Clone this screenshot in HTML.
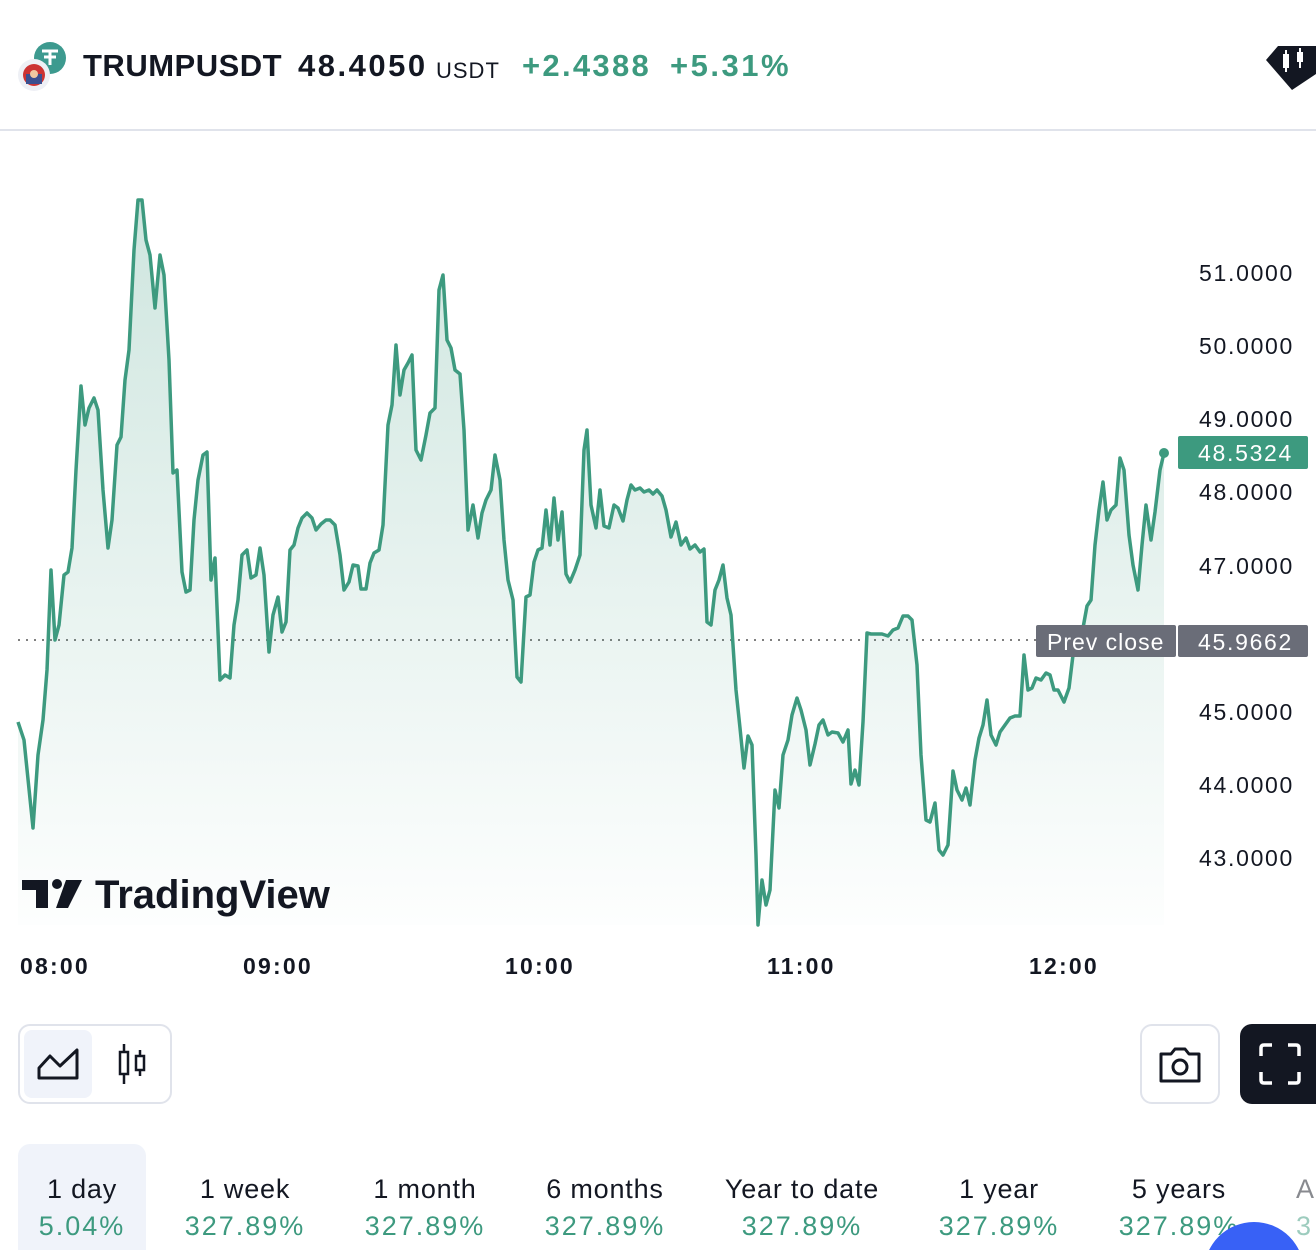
<!DOCTYPE html>
<html><head><meta charset="utf-8"><style>
*{margin:0;padding:0;box-sizing:border-box}
html,body{width:1316px;height:1250px;overflow:hidden}
body{background:#fff;font-family:"Liberation Sans",sans-serif;color:#131722;position:relative}
.hdr{position:absolute;top:0;left:0;width:1316px;height:131px;border-bottom:2px solid #e0e3eb}
.abs{position:absolute;white-space:nowrap}
.yl{position:absolute;left:1199px;font-size:23px;color:#131722;letter-spacing:1.7px}
.xl{position:absolute;top:953px;font-size:23px;font-weight:bold;letter-spacing:2.2px}
.tab{position:absolute;top:1144px;height:106px;text-align:center;font-size:27px;letter-spacing:0.8px}
.tab .p{color:#3d9a7f;margin-top:6px;letter-spacing:2px}
</style></head><body>
<div class="hdr">
 <svg class="abs" style="left:18px;top:40px" width="52" height="52" viewBox="0 0 52 52">
  <circle cx="32" cy="18" r="16" fill="#3d9a8f"/>
  <path d="M24 11h16M32 11v14M26 17h12" stroke="#fff" stroke-width="3" fill="none"/>
  <circle cx="16" cy="35" r="16" fill="#eef0f5"/>
  <circle cx="16" cy="35" r="11" fill="#c33"/>
  <rect x="8" y="34" width="16" height="10" fill="#3b4f8f"/>
  <circle cx="16" cy="34" r="4" fill="#f0c8a0"/>
 </svg>
 <div class="abs" style="left:83px;top:48px;font-size:31px;font-weight:bold;letter-spacing:0.5px">TRUMPUSDT</div>
 <div class="abs" style="left:298px;top:48px;font-size:31px;font-weight:bold;letter-spacing:2.5px">48.4050</div>
 <div class="abs" style="left:436px;top:58px;font-size:22px;letter-spacing:1px">USDT</div>
 <div class="abs" style="left:522px;top:48px;font-size:31px;font-weight:bold;color:#3d9a7f;letter-spacing:2.3px">+2.4388</div>
 <div class="abs" style="left:670px;top:48px;font-size:31px;font-weight:bold;color:#3d9a7f;letter-spacing:2.5px">+5.31%</div>
 <svg class="abs" style="left:1264px;top:42px" width="52" height="50" viewBox="0 0 52 50">
  <path d="M2 18 14 4h38v28L28 48Z" fill="#131722"/>
  <rect x="19" y="12" width="6" height="14" fill="#fff"/><path d="M22 8v22" stroke="#fff" stroke-width="2"/>
  <rect x="33" y="10" width="6" height="10" fill="#fff"/><path d="M36 6v20" stroke="#fff" stroke-width="2"/>
 </svg>
</div>

<svg class="abs" style="left:0;top:0" width="1316" height="1000">
 <defs><linearGradient id="g" x1="0" y1="0" x2="0" y2="1"><stop offset="0" stop-color="#3d9a7f" stop-opacity="0.25"/><stop offset="1" stop-color="#3d9a7f" stop-opacity="0.01"/></linearGradient></defs>
 <line x1="18" y1="640" x2="1036" y2="640" stroke="#555" stroke-width="1.5" stroke-dasharray="2,6"/>
 <polygon fill="url(#g)" points="18,925 18,722 24,740 33,828 38,755 43,720 47,670 51,570 55,640 59,625 64,575 68,572 72,548 76,470 81,386 85,425 89,408 94,398 98,410 103,490 108,548 112,520 117,445 121,437 125,380 129,350 134,250 138,200 142,200 146,240 150,255 155,308 160,255 164,275 169,360 173,473 177,470 182,572 186,592 190,590 194,520 198,480 203,455 207,452 211,580 215,558 220,680 225,675 230,678 234,625 238,600 242,555 247,550 251,578 256,575 260,548 264,575 269,652 273,615 278,597 282,632 286,622 290,550 294,545 298,528 302,518 307,513 312,518 316,530 321,524 326,520 330,520 335,525 340,555 344,590 349,582 353,565 358,566 361,589 366,589 370,563 374,553 379,550 383,525 388,425 392,405 396,345 400,395 404,370 408,363 412,355 416,450 421,460 426,435 430,413 435,408 439,290 443,275 447,340 451,348 455,370 460,374 464,430 468,530 473,505 478,538 482,513 486,500 491,490 495,455 500,480 504,540 508,580 513,600 517,677 521,682 526,597 530,595 534,562 538,550 542,548 546,510 550,545 554,498 558,540 562,512 566,574 570,582 575,570 580,555 584,450 587,430 591,505 596,528 600,490 604,526 609,528 614,505 618,508 623,521 627,500 631,485 635,490 640,488 644,492 649,490 653,494 657,490 662,496 666,510 671,537 676,522 681,545 686,538 690,549 695,545 700,552 704,549 707,622 711,625 715,590 719,580 723,565 727,598 731,615 736,690 740,728 744,768 748,736 752,745 756,855 758,925 762,880 766,905 770,890 775,790 779,808 783,755 788,740 792,715 797,698 801,710 806,730 810,765 815,744 819,725 823,720 828,735 832,732 838,733 843,742 848,730 851,784 855,770 859,785 863,722 867,633 871,634 877,634 882,634 888,636 893,630 898,628 903,616 908,616 912,620 917,665 921,755 926,820 930,822 935,803 939,850 943,855 948,845 953,771 957,790 962,800 966,788 970,805 975,760 979,738 983,725 987,700 991,735 996,745 1000,732 1005,725 1010,718 1015,716 1020,716 1024,655 1028,690 1032,688 1036,678 1041,680 1046,673 1050,675 1054,690 1058,690 1064,702 1069,688 1073,655 1079,638 1083,628 1087,606 1091,600 1095,545 1099,510 1103,482 1107,520 1111,510 1116,505 1120,458 1124,470 1129,535 1133,565 1138,590 1142,545 1146,505 1151,540 1155,512 1160,470 1164,453 1164,925"/>
 <polyline fill="none" stroke="#3d9a7f" stroke-width="3.5" stroke-linejoin="round" points="18,722 24,740 33,828 38,755 43,720 47,670 51,570 55,640 59,625 64,575 68,572 72,548 76,470 81,386 85,425 89,408 94,398 98,410 103,490 108,548 112,520 117,445 121,437 125,380 129,350 134,250 138,200 142,200 146,240 150,255 155,308 160,255 164,275 169,360 173,473 177,470 182,572 186,592 190,590 194,520 198,480 203,455 207,452 211,580 215,558 220,680 225,675 230,678 234,625 238,600 242,555 247,550 251,578 256,575 260,548 264,575 269,652 273,615 278,597 282,632 286,622 290,550 294,545 298,528 302,518 307,513 312,518 316,530 321,524 326,520 330,520 335,525 340,555 344,590 349,582 353,565 358,566 361,589 366,589 370,563 374,553 379,550 383,525 388,425 392,405 396,345 400,395 404,370 408,363 412,355 416,450 421,460 426,435 430,413 435,408 439,290 443,275 447,340 451,348 455,370 460,374 464,430 468,530 473,505 478,538 482,513 486,500 491,490 495,455 500,480 504,540 508,580 513,600 517,677 521,682 526,597 530,595 534,562 538,550 542,548 546,510 550,545 554,498 558,540 562,512 566,574 570,582 575,570 580,555 584,450 587,430 591,505 596,528 600,490 604,526 609,528 614,505 618,508 623,521 627,500 631,485 635,490 640,488 644,492 649,490 653,494 657,490 662,496 666,510 671,537 676,522 681,545 686,538 690,549 695,545 700,552 704,549 707,622 711,625 715,590 719,580 723,565 727,598 731,615 736,690 740,728 744,768 748,736 752,745 756,855 758,925 762,880 766,905 770,890 775,790 779,808 783,755 788,740 792,715 797,698 801,710 806,730 810,765 815,744 819,725 823,720 828,735 832,732 838,733 843,742 848,730 851,784 855,770 859,785 863,722 867,633 871,634 877,634 882,634 888,636 893,630 898,628 903,616 908,616 912,620 917,665 921,755 926,820 930,822 935,803 939,850 943,855 948,845 953,771 957,790 962,800 966,788 970,805 975,760 979,738 983,725 987,700 991,735 996,745 1000,732 1005,725 1010,718 1015,716 1020,716 1024,655 1028,690 1032,688 1036,678 1041,680 1046,673 1050,675 1054,690 1058,690 1064,702 1069,688 1073,655 1079,638 1083,628 1087,606 1091,600 1095,545 1099,510 1103,482 1107,520 1111,510 1116,505 1120,458 1124,470 1129,535 1133,565 1138,590 1142,545 1146,505 1151,540 1155,512 1160,470 1164,453"/>
 <circle cx="1164" cy="453" r="5" fill="#3d9a7f"/>
 <rect x="1036" y="625" width="140" height="32" rx="2" fill="#6a6d78"/>
 <text x="1047" y="650" font-size="23" fill="#fff" font-family="Liberation Sans" letter-spacing="1">Prev close</text>
 <rect x="1178" y="625" width="130" height="32" rx="2" fill="#6a6d78"/>
 <text x="1198" y="650" font-size="23" fill="#fff" font-family="Liberation Sans" letter-spacing="1.7">45.9662</text>
 <rect x="1178" y="436" width="130" height="33" rx="2" fill="#3d9a7f"/>
 <text x="1198" y="461" font-size="23" fill="#fff" font-family="Liberation Sans" letter-spacing="1.7">48.5324</text>
 <path d="M22 880h26v28h-12v-18h-14z" fill="#131722"/>
 <circle cx="57" cy="884" r="5" fill="#131722"/>
 <path d="M66 880h16l-14 28h-12z" fill="#131722"/>
 <text x="95" y="908" font-size="40" font-weight="bold" fill="#131722" font-family="Liberation Sans" letter-spacing="0">TradingView</text>
</svg>

<div class="yl" style="top:260px">51.0000</div>
<div class="yl" style="top:333px">50.0000</div>
<div class="yl" style="top:406px">49.0000</div>
<div class="yl" style="top:479px">48.0000</div>
<div class="yl" style="top:553px">47.0000</div>
<div class="yl" style="top:699px">45.0000</div>
<div class="yl" style="top:772px">44.0000</div>
<div class="yl" style="top:845px">43.0000</div>

<div class="xl" style="left:20px">08:00</div>
<div class="xl" style="left:243px">09:00</div>
<div class="xl" style="left:505px">10:00</div>
<div class="xl" style="left:767px">11:00</div>
<div class="xl" style="left:1029px">12:00</div>

<div class="abs" style="left:18px;top:1024px;width:154px;height:80px;border:2px solid #e0e3eb;border-radius:12px"></div>
<div class="abs" style="left:24px;top:1030px;width:68px;height:68px;background:#f0f3fa;border-radius:8px"></div>
<svg class="abs" style="left:36px;top:1046px" width="44" height="36" viewBox="0 0 44 36"><path d="M3 32V22L14 10l10 10 17-16v28Z" fill="none" stroke="#131722" stroke-width="3" stroke-linejoin="round"/></svg>
<svg class="abs" style="left:116px;top:1042px" width="34" height="44" viewBox="0 0 34 44"><path d="M8 2v40M24 8v26" stroke="#131722" stroke-width="2.5"/><rect x="4" y="10" width="8" height="22" fill="#fff" stroke="#131722" stroke-width="2.5"/><rect x="20" y="14" width="8" height="14" fill="#fff" stroke="#131722" stroke-width="2.5"/></svg>

<div class="abs" style="left:1140px;top:1024px;width:80px;height:80px;border:2px solid #e0e3eb;border-radius:12px"></div>
<svg class="abs" style="left:1157px;top:1046px" width="46" height="38" viewBox="0 0 46 38"><path d="M4 8h10l4-5h10l4 5h10v27H4Z" fill="none" stroke="#131722" stroke-width="3" stroke-linejoin="round"/><circle cx="23" cy="21" r="7" fill="none" stroke="#131722" stroke-width="3"/></svg>
<div class="abs" style="left:1240px;top:1024px;width:76px;height:80px;background:#131722;border-radius:12px 0 0 12px"></div>
<svg class="abs" style="left:1258px;top:1042px" width="44" height="44" viewBox="0 0 44 44"><path d="M3 14V6q0-3 3-3h8M30 3h8q3 0 3 3v8M41 30v8q0 3-3 3h-8M14 41H6q-3 0-3-3v-8" fill="none" stroke="#fff" stroke-width="3.5"/></svg>

<div class="abs" style="left:18px;top:1144px;width:128px;height:106px;background:#f0f3fa;border-radius:12px 12px 0 0"></div>
<div class="tab" style="left:18px;width:128px;padding-top:30px">1 day<div class="p">5.04%</div></div>
<div class="tab" style="left:170px;width:150px;padding-top:30px">1 week<div class="p">327.89%</div></div>
<div class="tab" style="left:350px;width:150px;padding-top:30px">1 month<div class="p">327.89%</div></div>
<div class="tab" style="left:530px;width:150px;padding-top:30px">6 months<div class="p">327.89%</div></div>
<div class="tab" style="left:712px;width:180px;padding-top:30px">Year to date<div class="p">327.89%</div></div>
<div class="tab" style="left:924px;width:150px;padding-top:30px">1 year<div class="p">327.89%</div></div>
<div class="tab" style="left:1104px;width:150px;padding-top:30px">5 years<div class="p">327.89%</div></div>
<div class="tab" style="left:1296px;width:20px;overflow:hidden;padding-top:30px;text-align:left;opacity:0.5">A<div class="p">3</div></div>
<div class="abs" style="left:1204px;top:1222px;width:100px;height:28px;overflow:hidden"><div style="width:100px;height:100px;border-radius:50%;background:#3861f6"></div></div>
</body></html>
